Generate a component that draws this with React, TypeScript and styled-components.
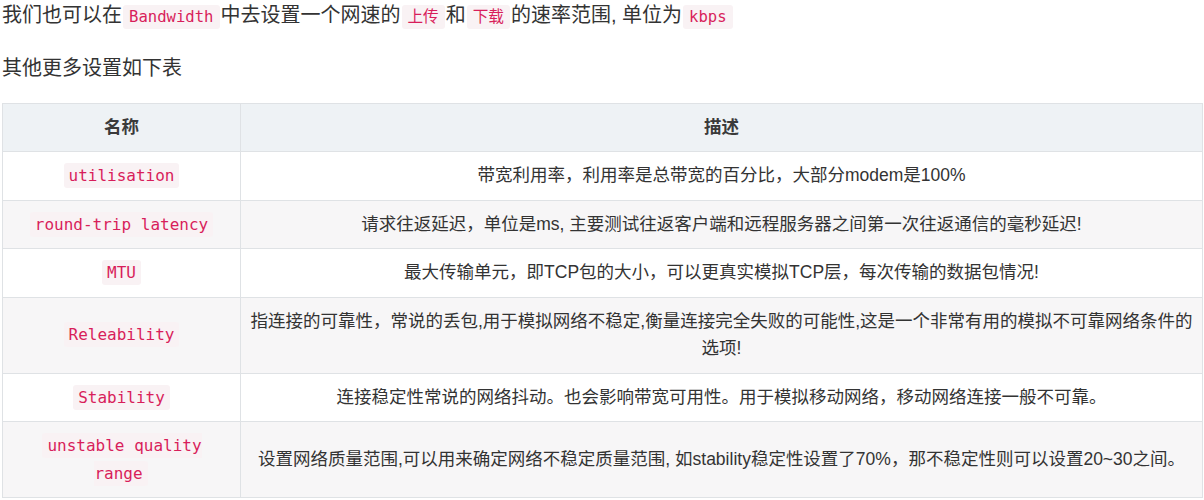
import React from "react";
import styled, { createGlobalStyle, css } from "styled-components";

const GlobalStyle = createGlobalStyle`
  html, body {
    margin: 0;
    padding: 0;
    background: #fff;
  }
  body {
    color: #333;
    font-family: "Liberation Sans", "Noto Sans CJK SC", sans-serif;
  }
`;

const Page = styled.div`
  padding: 0 1px 0 2px;
`;

const Para = styled.p<{ $gap?: number }>`
  margin: ${(p) => p.$gap ?? 0}px 0 0;
  font-size: 20px;
  line-height: 30px;
`;

const Code = styled.code`
  font-family: "DejaVu Sans Mono", "Noto Sans CJK SC", monospace;
  font-size: 15.6px;
  color: #d81e5b;
  background: #f9f2f4;
  padding: 3px 6px;
  margin: 0 1px;
  border-radius: 3px;
`;

const CellCode = styled(Code)`
  font-size: 16px;
  padding: 3px 5px;
`;

const Table = styled.table`
  width: 100%;
  margin-top: 20px;
  border-collapse: collapse;
  font-size: 17.5px;
  line-height: 27.5px;
`;

const Row = styled.tr<{ $striped?: boolean }>`
  background: #fff;
  ${(p) =>
    p.$striped &&
    css`
      background: #f7f6f7;
    `}
`;

const HeadRow = styled.tr`
  background: #eef2f5;
`;

const Th = styled.th<{ $name?: boolean }>`
  border: 1px solid #dfe2e5;
  padding: 10px;
  line-height: 27px;
  font-weight: bold;
  color: #3a3a3a;
  text-align: center;
  ${(p) =>
    p.$name &&
    css`
      width: 217px;
    `}
`;

const Td = styled.td<{ $wide?: boolean }>`
  border: 1px solid #dfe2e5;
  padding: 10px;
  text-align: center;
  vertical-align: middle;
  ${(p) =>
    p.$wide &&
    css`
      padding: 10px 7px;
    `}
`;

const rows: { name: string; desc: string }[] = [
  {
    name: "utilisation",
    desc: "带宽利用率，利用率是总带宽的百分比，大部分modem是100%",
  },
  {
    name: "round-trip latency",
    desc: "请求往返延迟，单位是ms, 主要测试往返客户端和远程服务器之间第一次往返通信的毫秒延迟!",
  },
  {
    name: "MTU",
    desc: "最大传输单元，即TCP包的大小，可以更真实模拟TCP层，每次传输的数据包情况!",
  },
  {
    name: "Releability",
    desc: "指连接的可靠性，常说的丢包,用于模拟网络不稳定,衡量连接完全失败的可能性,这是一个非常有用的模拟不可靠网络条件的选项!",
  },
  {
    name: "Stability",
    desc: "连接稳定性常说的网络抖动。也会影响带宽可用性。用于模拟移动网络，移动网络连接一般不可靠。",
  },
  {
    name: "unstable quality range",
    desc: "设置网络质量范围,可以用来确定网络不稳定质量范围, 如stability稳定性设置了70%，那不稳定性则可以设置20~30之间。",
  },
];

export default function App() {
  return (
    <Page>
      <GlobalStyle />
      <Para>
        我们也可以在<Code>Bandwidth</Code>中去设置一个网速的<Code>上传</Code>和
        <Code>下载</Code>的速率范围, 单位为<Code>kbps</Code>
      </Para>
      <Para $gap={21}>其他更多设置如下表</Para>
      <Table>
        <thead>
          <HeadRow>
            <Th $name>名称</Th>
            <Th>描述</Th>
          </HeadRow>
        </thead>
        <tbody>
          {rows.map((r, i) => (
            <Row key={r.name} $striped={i % 2 === 1}>
              <Td>
                <CellCode>{r.name}</CellCode>
              </Td>
              <Td $wide>{r.desc}</Td>
            </Row>
          ))}
        </tbody>
      </Table>
    </Page>
  );
}
